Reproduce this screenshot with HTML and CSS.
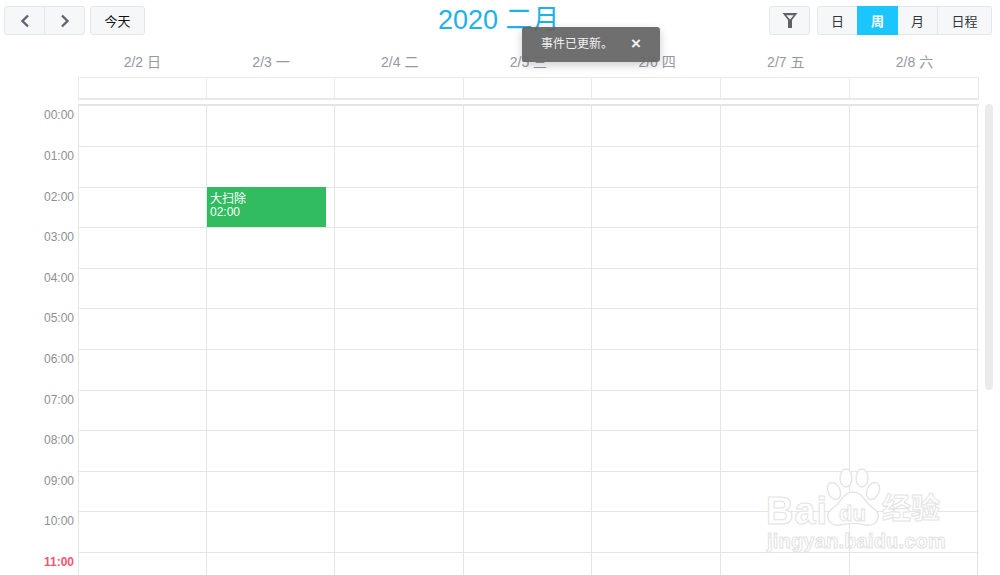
FILE: index.html
```html
<!DOCTYPE html>
<html lang="zh">
<head>
<meta charset="utf-8">
<title>日历</title>
<link rel="stylesheet" href="styles.css">
</head>
<body>
<div class="page">
  <header class="toolbar">
    <div class="tools">
      <div class="group">
        <button class="btn nav"><svg width="12" height="14" viewBox="0 0 12 14"><path d="M9 1.5 3.5 7 9 12.5" fill="none" stroke="#5d6670" stroke-width="2.4"/></svg></button>
        <button class="btn nav"><svg width="12" height="14" viewBox="0 0 12 14"><path d="M3 1.5 8.5 7 3 12.5" fill="none" stroke="#5d6670" stroke-width="2.4"/></svg></button>
      </div>
      <button class="btn today">今天</button>
    </div>
    <h1 class="title">2020 二月</h1>
    <div class="tools">
      <button class="btn filter"><svg width="16" height="17" viewBox="0 0 16 17"><path d="M.5 1h15L10 8v8H6V8Z M4.3 3.2 8 7.4 11.7 3.2Z" fill="#5f6368" fill-rule="evenodd"/></svg></button>
      <div class="group">
        <button class="btn view">日</button>
        <button class="btn view active">周</button>
        <button class="btn view">月</button>
        <button class="btn view wide">日程</button>
      </div>
    </div>
  </header>

  <div class="heads">
    <div class="gutter"></div>
    <div class="head">2/2 日</div>
    <div class="head">2/3 一</div>
    <div class="head">2/4 二</div>
    <div class="head">2/5 三</div>
    <div class="head">2/6 四</div>
    <div class="head">2/7 五</div>
    <div class="head">2/8 六</div>
  </div>

  <div class="allday">
    <div class="gutter"></div>
    <div class="allcells"><i></i><i></i><i></i><i></i><i></i><i></i><i></i></div>
  </div>

  <div class="body">
    <div class="grid">
      <div class="row"><span class="time">00:00</span><div class="cells"><i></i><i></i><i></i><i></i><i></i><i></i><i></i></div></div>
      <div class="row"><span class="time">01:00</span><div class="cells"><i></i><i></i><i></i><i></i><i></i><i></i><i></i></div></div>
      <div class="row"><span class="time">02:00</span><div class="cells"><i></i><i class="has-event"><div class="event"><span>大扫除</span><span>02:00</span></div></i><i></i><i></i><i></i><i></i><i></i></div></div>
      <div class="row"><span class="time">03:00</span><div class="cells"><i></i><i></i><i></i><i></i><i></i><i></i><i></i></div></div>
      <div class="row"><span class="time">04:00</span><div class="cells"><i></i><i></i><i></i><i></i><i></i><i></i><i></i></div></div>
      <div class="row"><span class="time">05:00</span><div class="cells"><i></i><i></i><i></i><i></i><i></i><i></i><i></i></div></div>
      <div class="row"><span class="time">06:00</span><div class="cells"><i></i><i></i><i></i><i></i><i></i><i></i><i></i></div></div>
      <div class="row"><span class="time">07:00</span><div class="cells"><i></i><i></i><i></i><i></i><i></i><i></i><i></i></div></div>
      <div class="row"><span class="time">08:00</span><div class="cells"><i></i><i></i><i></i><i></i><i></i><i></i><i></i></div></div>
      <div class="row"><span class="time">09:00</span><div class="cells"><i></i><i></i><i></i><i></i><i></i><i></i><i></i></div></div>
      <div class="row"><span class="time">10:00</span><div class="cells"><i></i><i></i><i></i><i></i><i></i><i></i><i></i></div></div>
      <div class="row"><span class="time now">11:00</span><div class="cells"><i></i><i></i><i></i><i></i><i></i><i></i><i></i></div></div>
    </div>
    <div class="scrollbar"><div class="thumb"></div></div>
  </div>

  <div class="toast"><span>事件已更新。</span><span class="close">×</span></div>

  <div class="mark">
    <svg class="paw" width="60" height="62" viewBox="0 0 60 62">
      <g fill="#fff" stroke="#e4e4e4" stroke-width="1.4">
        <ellipse cx="23" cy="11" rx="6" ry="9"/>
        <ellipse cx="39" cy="11" rx="6" ry="9"/>
        <ellipse cx="11" cy="24" rx="6" ry="9" transform="rotate(-25 11 24)"/>
        <ellipse cx="50" cy="24" rx="6" ry="9" transform="rotate(25 50 24)"/>
        <path d="M30 25C20 25 18 36 10 41 0 48 6 60 17 58 25 56 35 56 43 58 54 60 60 48 50 41 42 36 40 25 30 25Z"/>
      </g>
    </svg>
    <span class="mark-bai">Bai</span><span class="mark-du">du</span><span class="mark-jy">经验</span>
    <span class="mark-url">jingyan.baidu.com</span>
  </div>
</div>
</body>
</html>
```
FILE: styles.css
```css
* { box-sizing: border-box; }
:root { --cols: 128px 128px 129px 128px 129px 129px 129px; }
html, body { margin: 0; height: 100%; overflow: hidden; background: #fff; }
body { font-family: "Liberation Sans", "Noto Sans CJK SC", sans-serif; }
.page { position: relative; height: 575px; overflow: hidden; }

.toolbar { display: flex; justify-content: space-between; align-items: flex-start; padding: 6px 8px 0 4px; height: 49px; }
.tools { display: flex; gap: 5px; }
.tools:last-child { gap: 6px; }
.group { display: flex; }
.btn { height: 29px; padding: 0; border: 1px solid #e4e7ea; background: #f6f7f9; border-radius: 3px; font: 13px "Liberation Sans", "Noto Sans CJK SC", sans-serif; color: #33373d; display: flex; align-items: center; justify-content: center; }
.group .btn { border-radius: 0; margin-left: -1px; }
.group .btn:first-child { border-radius: 3px 0 0 3px; margin-left: 0; }
.group .btn:last-child { border-radius: 0 3px 3px 0; }
.nav { width: 41px; }
.today { width: 55px; color: #111; }
.filter { width: 41px; margin-right: 1px; }
.view { width: 41px; }
.view.wide { width: 55px; }
.view.active { background: #1ac6fb; border-color: #1ac6fb; color: #fff; font-weight: 700; position: relative; }
.title { margin: 0; font-size: 27px; font-weight: 400; line-height: 30px; color: #1db2e9; position: absolute; left: 438px; top: 5px; }

.heads { display: grid; grid-template-columns: 78px repeat(7, 128.7px); height: 25px; align-items: center; }
.head { text-align: center; font-size: 14px; color: #9299a3; line-height: 16px; }

.allday { display: flex; height: 23px; margin-top: 3px; width: 979px; }
.gutter { width: 78px; flex: none; }
.allcells { flex: 1; display: grid; grid-template-columns: var(--cols); border: 1px solid #e8e9eb; border-left: 0; border-bottom-width: 2px; }
.allcells i { border-left: 1px solid #e8e9eb; }

.body { position: relative; margin-top: 4px; }
.grid { width: 979px; }
.row { display: flex; height: 40.6px; position: relative; }
.row:first-child { height: 42px; }
.row:first-child .cells { border-top: 2px solid #e4e5e8; }
.row + .row .cells { border-top: 1px solid #e6e6e6; }
.time { width: 78px; flex: none; text-align: right; padding: 2px 4px 0 0; font-size: 12px; line-height: 16px; color: #8d8f94; }
.row:first-child .time { padding-top: 3px; }
.time.now { color: #f5566f; font-weight: 700; }
.cells { flex: 1; display: grid; grid-template-columns: var(--cols); }
.cells i { display: block; border-left: 1px solid #e6e6e6; position: relative; }
.cells i:last-child { border-right: 1px solid #e2e2e2; }

.has-event { font-style: normal; }
.event { position: absolute; left: 0; top: -1px; width: 119px; height: 40px; background: #31bc60; color: #fff; padding: 6px 3px; font-size: 12px; line-height: 13px; display: flex; flex-direction: column; z-index: 1; }

.scrollbar { position: absolute; left: 985px; top: 0; width: 8px; height: 471px; }
.thumb { height: 286px; background: #ebebeb; border-radius: 4px; }

.toast { position: absolute; left: 522px; top: 27px; width: 138px; height: 35px; background: rgba(100, 100, 100, .93); border-radius: 3px; box-shadow: 0 3px 10px rgba(0, 0, 0, .2); color: #f2f2f2; font-size: 12px; line-height: 34px; display: flex; align-items: flex-start; padding-left: 19px; gap: 18px; z-index: 5; }
.close { font-size: 17px; font-weight: 700; line-height: 34px; }

.mark { position: absolute; left: 766px; top: 467px; width: 182px; height: 90px; z-index: 3; color: #fff; }
.mark span { position: absolute; -webkit-text-stroke: 1px #e3e3e3; font-weight: 700; line-height: 1; }
.paw { position: absolute; left: 57px; top: 0; }
.mark-bai { left: 0; top: 25px; font-size: 38px; letter-spacing: 1px; }
.mark-du { left: 73px; top: 36px; font-size: 22px; letter-spacing: 0; }
.mark-jy { left: 116px; top: 28px; font-size: 29px; }
.mark-url { left: 1px; top: 64px; font-size: 20px; letter-spacing: .2px; }
```
